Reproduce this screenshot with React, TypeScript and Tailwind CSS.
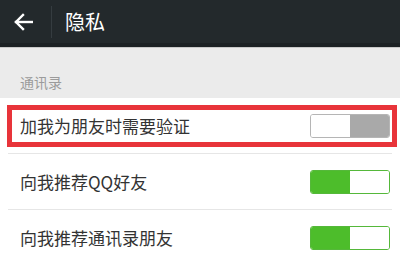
import React from 'react';

const font = { fontFamily: '"Noto Sans CJK SC", "Noto Sans", sans-serif' };

type ToggleProps = { on: boolean };

const Toggle: React.FC<ToggleProps> = ({ on }) => {
  if (on) {
    return (
      <div className="flex h-[24px] w-[80px] overflow-hidden rounded-[3px] border border-[#55b83a]">
        <div className="w-1/2 bg-[#4dbd2b]" />
        <div className="w-1/2 bg-white" />
      </div>
    );
  }
  return (
    <div className="flex h-[24px] w-[80px] overflow-hidden rounded-[3px] border border-[#b5b5b5]">
      <div className="w-1/2 bg-white" />
      <div className="w-1/2 bg-[#a9a9a9]" />
    </div>
  );
};

const Row: React.FC<{ label: string; on: boolean; divider?: boolean; marked?: boolean }> = ({ label, on, divider, marked }) => (
  <div className="relative bg-white">
    <div className="flex h-[55px] items-center justify-between pl-[20px] pr-[10px]">
      <span className="text-[17px] text-[#333]">{label}</span>
      <Toggle on={on} />
    </div>
    {divider && <div className="mx-[8px] h-px bg-[#e6e6e6]" />}
    {marked && (
      <div className="pointer-events-none absolute left-[7px] right-[3px] top-[7px] h-[42px] border-[5px] border-[#e8343a]" />
    )}
  </div>
);

export default function App() {
  return (
    <div className="h-[259px] w-[400px] overflow-hidden bg-white" style={font}>
      <div className="flex h-[43px] items-center bg-[#23292c]">
        <svg className="ml-[14px] h-[18px] w-[19px]" viewBox="0 0 19 18" fill="none" stroke="white" strokeWidth="2.4" strokeLinecap="square">
          <path d="M2 9 H18" />
          <path d="M9 2 L2 9 L9 16" />
        </svg>
        <div className="ml-[18px] h-[32px] w-px bg-[#353c40]" />
        <span className="ml-[13px] text-[20px] leading-none text-white">隐私</span>
      </div>
      <div className="h-[4px] bg-[#1c2124]" />
      <div className="h-px bg-[#c9c9c9]" />
      <div className="flex h-[50px] items-end bg-[#ebebeb] pb-[9px] pl-[20px]">
        <span className="text-[14px] leading-none text-[#9b9b9b]">通讯录</span>
      </div>
      <Row label="加我为朋友时需要验证" on={false} divider marked />
      <Row label="向我推荐QQ好友" on divider />
      <Row label="向我推荐通讯录朋友" on />
    </div>
  );
}
